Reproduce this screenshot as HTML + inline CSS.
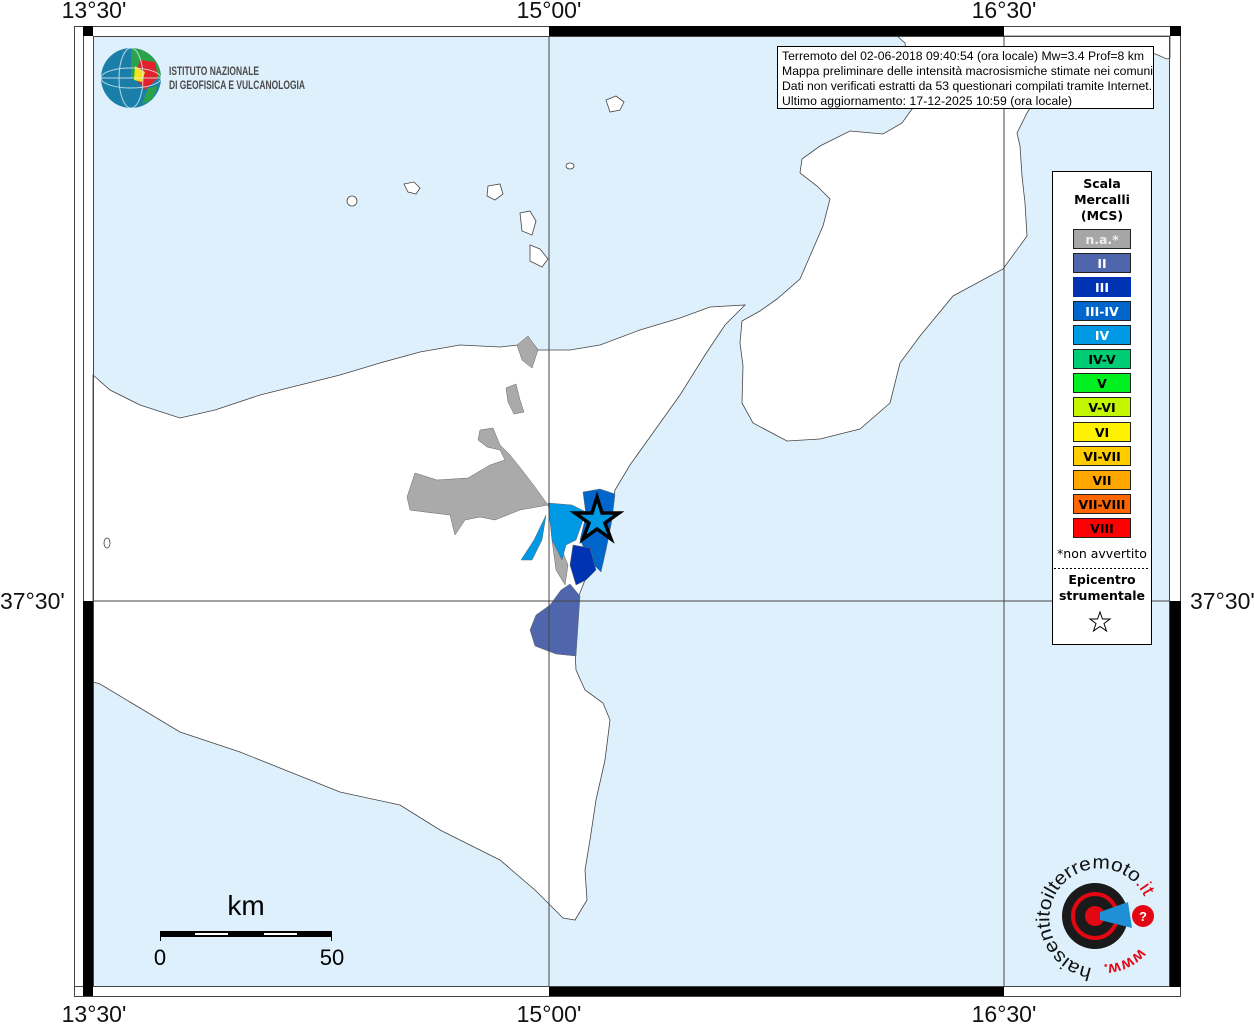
<!DOCTYPE html>
<html><head><meta charset="utf-8"><style>
html,body{margin:0;padding:0;background:#fff;width:1254px;height:1024px;overflow:hidden}
svg{display:block}
</style></head><body>
<svg width="1254" height="1024" viewBox="0 0 1254 1024" xmlns="http://www.w3.org/2000/svg" font-family="Liberation Sans, sans-serif">
<rect width="1254" height="1024" fill="#fff"/>
<rect x="93" y="36" width="1077" height="951" fill="#dff0fd"/>
<path d="M93,375 L110,390 140,405 180,418 215,410 260,395 300,385 340,375 380,363 420,352 460,345 500,347 518,345 528,337 538,350 570,350 600,345 640,330 680,318 710,307 745,305 725,325 705,355 680,395 655,430 630,465 615,490 610,520 600,560 585,580 578,598 574,630 576,670 585,690 603,703 610,720 605,760 596,800 590,840 585,870 587,900 575,920 563,918 550,905 535,890 500,860 440,830 400,805 340,792 290,772 240,752 180,732 130,702 100,684 93,682 Z" fill="#fff" stroke="#444" stroke-width="0.8"/>
<path d="M897,36 L905,43 912,109 902,123 883,134 850,131 820,146 802,159 800,173 817,186 830,199 823,226 810,256 800,279 777,299 760,311 742,321 740,343 743,366 742,403 753,423 787,441 820,439 860,429 890,403 900,363 920,336 953,296 1003,269 1027,236 1025,203 1022,176 1020,146 1017,133 1027,113 1030,108 1100,70 1153,53 1167,59 1170,58 1170,36 Z" fill="#fff" stroke="#444" stroke-width="0.8"/>
<g fill="#fff" stroke="#444" stroke-width="0.8">
<ellipse cx="352" cy="201" rx="5" ry="5"/>
<path d="M404,184 l10,-2 6,6 -4,6 -8,-2 z"/>
<path d="M488,186 l12,-2 3,10 -8,6 -8,-4 z"/>
<path d="M520,213 l10,-2 6,10 -4,14 -10,-4 z"/>
<path d="M530,245 l10,4 8,10 -6,8 -12,-6 z"/>
<path d="M606,100 l10,-4 8,6 -4,8 -10,2 z"/>
<ellipse cx="570" cy="166" rx="4" ry="3"/>
<ellipse cx="107" cy="543" rx="3" ry="5"/>
</g>
<g stroke="#666" stroke-width="0.5">
<path d="M407,497 415,473 437,480 468,478 490,465 505,460 500,450 487,447 478,440 480,430 493,428 500,445 510,455 522,470 535,487 548,505 520,510 495,520 480,517 465,520 455,535 450,515 425,512 410,510Z" fill="#aaa"/>
<path d="M506,388 516,384 520,400 524,412 514,414 508,402Z" fill="#aaa"/>
<path d="M517,345 528,336 538,350 532,368 522,360Z" fill="#aaa"/>
<path d="M549,506 552,540 556,570 565,585 568,565 560,545Z" fill="#aaa"/>
<path d="M548,503 572,505 586,512 576,540 566,545 562,560 552,540Z" fill="#0099e6"/>
<path d="M546,515 534,540 521,560 532,560 542,540Z" fill="#0099e6"/>
<path d="M583,492 600,489 615,494 612,520 606,550 601,572 591,562 580,540 586,515Z" fill="#0066cc"/>
<path d="M573,545 590,548 596,570 586,580 576,585 570,565Z" fill="#0033b3"/>
<path d="M561,590 570,584 580,596 576,656 556,654 535,646 530,630 536,615 550,605Z" fill="#4f66ad"/>
</g>
<polygon points="597,497 602,513 619,513 605,523 611,539 597,529 583,539 589,523 575,513 592,513" fill="#0099e6" stroke="#000" stroke-width="3.5" stroke-linejoin="miter"/>
<g stroke="#444" stroke-width="1">
<line x1="549" y1="36" x2="549" y2="987"/><line x1="1004" y1="36" x2="1004" y2="987"/>
<line x1="93" y1="601" x2="1170" y2="601"/>
</g>
<rect x="74.5" y="26.5" width="1106" height="970" fill="none" stroke="#444"/>
<rect x="93.5" y="36.5" width="1076" height="950" fill="none" stroke="#444"/>
<line x1="83.5" y1="26" x2="83.5" y2="996" stroke="#444"/>
<line x1="74" y1="986.5" x2="1181" y2="986.5" stroke="#444"/>
<g fill="#000">
<rect x="83" y="26" width="10" height="10"/>
<rect x="549" y="26" width="455" height="10"/>
<rect x="83" y="601" width="10" height="395"/>
<rect x="1170" y="601" width="11" height="386"/>
<rect x="549" y="987" width="455" height="9"/>
<rect x="83" y="987" width="10" height="9"/>
<rect x="1170" y="26" width="11" height="10"/>
</g>
<g font-size="23" fill="#111">
<text x="94" y="18" text-anchor="middle">13°30'</text>
<text x="549" y="18" text-anchor="middle">15°00'</text>
<text x="1004" y="18" text-anchor="middle">16°30'</text>
<text x="94" y="1022" text-anchor="middle">13°30'</text>
<text x="549" y="1022" text-anchor="middle">15°00'</text>
<text x="1004" y="1022" text-anchor="middle">16°30'</text>
<text x="0" y="609">37°30'</text>
<text x="1190" y="609">37°30'</text>
</g>
<rect x="777.5" y="46.5" width="376" height="62" fill="#fff" stroke="#000"/>
<g font-size="12.2" fill="#000">
<text x="782" y="60" textLength="362">Terremoto del 02-06-2018 09:40:54 (ora locale) Mw=3.4 Prof=8 km</text>
<text x="782" y="75" textLength="371">Mappa preliminare delle intensità macrosismiche stimate nei comuni</text>
<text x="782" y="90" textLength="370">Dati non verificati estratti da 53 questionari compilati tramite Internet.</text>
<text x="782" y="105" textLength="290">Ultimo aggiornamento: 17-12-2025 10:59 (ora locale)</text>
</g>
<rect x="1052.5" y="171.5" width="99" height="473" fill="#fff" stroke="#000"/>
<g font-family="DejaVu Sans, sans-serif" font-weight="bold" font-size="12.5" text-anchor="middle" fill="#000">
<text x="1102" y="188">Scala</text><text x="1102" y="204">Mercalli</text><text x="1102" y="220">(MCS)</text>
</g>
<g stroke="#222" stroke-width="1">
<rect x="1073.5" y="229.5" width="57" height="19" fill="#a6a6a6"/>
<rect x="1073.5" y="253.5" width="57" height="19" fill="#4f66ad"/>
<rect x="1073.5" y="277.5" width="57" height="19" fill="#0033b3" stroke="#0033b3"/>
<rect x="1073.5" y="301.5" width="57" height="19" fill="#0066cc"/>
<rect x="1073.5" y="325.5" width="57" height="19" fill="#0099e6"/>
<rect x="1073.5" y="349.5" width="57" height="19" fill="#00cc73"/>
<rect x="1073.5" y="373.5" width="57" height="19" fill="#00f020"/>
<rect x="1073.5" y="397.5" width="57" height="19" fill="#c2f700"/>
<rect x="1073.5" y="422.5" width="57" height="19" fill="#fff200"/>
<rect x="1073.5" y="446.5" width="57" height="19" fill="#ffcc00"/>
<rect x="1073.5" y="470.5" width="57" height="19" fill="#ffa600"/>
<rect x="1073.5" y="494.5" width="57" height="19" fill="#ff6600"/>
<rect x="1073.5" y="518.5" width="57" height="19" fill="#ff0000"/>
</g>
<g font-family="DejaVu Sans, sans-serif" font-weight="bold" font-size="12.5" text-anchor="middle">
<text x="1102" y="244" fill="#eee">n.a.*</text>
<text x="1102" y="268" fill="#fff">II</text>
<text x="1102" y="292" fill="#fff">III</text>
<text x="1102" y="316" fill="#fff">III-IV</text>
<text x="1102" y="340" fill="#fff">IV</text>
<text x="1102" y="364" fill="#000">IV-V</text>
<text x="1102" y="388" fill="#000">V</text>
<text x="1102" y="412" fill="#000">V-VI</text>
<text x="1102" y="437" fill="#000">VI</text>
<text x="1102" y="461" fill="#000">VI-VII</text>
<text x="1102" y="485" fill="#000">VII</text>
<text x="1102" y="509" fill="#000">VII-VIII</text>
<text x="1102" y="533" fill="#000">VIII</text>
<text x="1102" y="558" font-weight="normal" fill="#000">*non avvertito</text>
<text x="1102" y="584" fill="#000">Epicentro</text>
<text x="1102" y="600" fill="#000">strumentale</text>
</g>
<line x1="1054" y1="568.5" x2="1150" y2="568.5" stroke="#000" stroke-dasharray="2,2"/>
<polygon points="1100,612 1102.5,619 1110,619 1104,623.5 1106.5,631 1100,626.5 1093.5,631 1096,623.5 1090,619 1097.5,619" fill="none" stroke="#000" stroke-width="1"/>
<text x="246" y="915" font-size="28" text-anchor="middle" fill="#000">km</text>
<rect x="160" y="931" width="172" height="6" fill="#000"/>
<rect x="195" y="933" width="33" height="2" fill="#fff"/>
<rect x="264" y="933" width="33" height="2" fill="#fff"/>
<line x1="160.5" y1="931" x2="160.5" y2="941" stroke="#000"/>
<line x1="331.5" y1="931" x2="331.5" y2="941" stroke="#000"/>
<text x="160" y="965" font-size="22" text-anchor="middle" fill="#000">0</text>
<text x="332" y="965" font-size="22" text-anchor="middle" fill="#000">50</text>
<circle cx="131" cy="78" r="30" fill="#1a7fa8"/>
<path d="M131,48 A30,30 0 0 1 161,78 L131,78 Z" fill="#2aa14a"/>
<path d="M140,60 L155,62 158,78 145,90 135,78Z" fill="#e1222c"/>
<path d="M135,66 L145,72 142,82 134,80Z" fill="#f3e21c"/>
<path d="M148,88 L158,86 152,100 142,104Z" fill="#2aa14a"/>
<g stroke="#dfeef5" stroke-width="1" fill="none" opacity="0.8">
<ellipse cx="131" cy="78" rx="30" ry="10"/><ellipse cx="131" cy="78" rx="12" ry="30"/><line x1="101" y1="78" x2="161" y2="78"/>
</g>
<g font-family="Liberation Sans Narrow, Liberation Sans, sans-serif" font-weight="bold" font-size="12" fill="#4a4a4a">
<text x="169" y="75" textLength="90" lengthAdjust="spacingAndGlyphs">ISTITUTO NAZIONALE</text>
<text x="169" y="89" textLength="136" lengthAdjust="spacingAndGlyphs">DI GEOFISICA E VULCANOLOGIA</text>
</g>
<circle cx="1095" cy="916" r="33" fill="#1a1a1a"/>
<circle cx="1095" cy="916" r="22" fill="none" stroke="#e30613" stroke-width="4"/>
<circle cx="1095" cy="916" r="10" fill="#e30613"/>
<path d="M1100,912 L1128,902 L1132,928 L1100,920Z" fill="#1f8fd6"/>
<circle cx="1143" cy="916" r="11" fill="#e30613"/>
<text x="1143" y="921" font-size="13" font-weight="bold" fill="#fff" text-anchor="middle">?</text>
<defs><path id="arc" d="M1092,968 A50,50 0 1 1 1144,896"/><path id="arc2" d="M1140,948 A46,46 0 0 1 1100,964"/></defs>
<text font-size="19" fill="#111"><textPath href="#arc" textLength="205" lengthAdjust="spacingAndGlyphs">haisentitoilterremoto<tspan fill="#e30613">.it</tspan></textPath></text>
<text font-size="16" font-weight="bold" fill="#e30613"><textPath href="#arc2">www.</textPath></text>
</svg>
</body></html>
